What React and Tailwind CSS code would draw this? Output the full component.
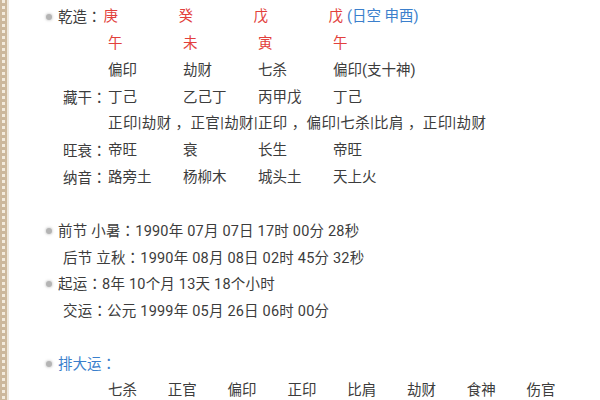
// Bazi chart readout: four pillars, hidden stems, luck cycle.

const RED = 'text-[#e2403c]'
const BLUE = 'text-[#3b7fcc]'

// centred full-width colon, as on the original device font
const C = () => <span className="font-['Noto_Sans_CJK_TC',sans-serif]">：</span>

function Bullet() {
  return (
    <span className="w-[58px] shrink-0 flex justify-end pr-[6px]">
      <span className="w-[6px] h-[6px] rounded-full bg-[#b4b4b4] shadow-[0_0_2px_1px_rgba(190,190,190,0.5)]" />
    </span>
  )
}

function Row({ children }) {
  return <div className="flex items-center h-[26.7px] whitespace-nowrap">{children}</div>
}

function Label({ children }) {
  return <span className="w-[108px] shrink-0 pl-[63px]">{children}</span>
}

function Cell({ children, className = '' }) {
  return <span className={`w-[75px] shrink-0 ${className}`}>{children}</span>
}

export default function App() {
  const pillars = [
    { stem: '庚', branch: '午', god: '偏印', hidden: '丁己', state: '帝旺', sound: '路旁土' },
    { stem: '癸', branch: '未', god: '劫财', hidden: '乙己丁', state: '衰', sound: '杨柳木' },
    { stem: '戊', branch: '寅', god: '七杀', hidden: '丙甲戊', state: '长生', sound: '城头土' },
    { stem: '戊', branch: '午', god: '偏印(支十神)', hidden: '丁己', state: '帝旺', sound: '天上火' },
  ]
  const luck = ['七杀', '正官', '偏印', '正印', '比肩', '劫财', '食神', '伤官']

  return (
    <div
      className="flex w-[600px] h-[400px] overflow-hidden bg-white text-[#3c3c3c] text-[14.5px]"
      style={{ fontFamily: 'Roboto, "Noto Sans CJK SC", sans-serif' }}
    >
      <div className="w-[7px] shrink-0 bg-[#ccb89c] flex justify-center">
        <div className="w-[3px] h-full bg-[repeating-linear-gradient(to_bottom,#f3ebdd_0px,#f3ebdd_3px,#ccb89c_3px,#ccb89c_6px)]" />
      </div>
      <div className="w-[2px] shrink-0 bg-[#efe8dc]" />

      <div className="flex-1 -ml-[9px] pt-[4px]">
        <Row>
          <Bullet />
          <span className="pr-[2px]">乾造<C /></span>
          {pillars.map((p, i) => (
            <Cell key={i} className={RED}>
              {p.stem}
              {i === 3 && <span className={`${BLUE} ml-[4px]`}>(日空 申酉)</span>}
            </Cell>
          ))}
        </Row>
        <Row>
          <Label />
          {pillars.map((p, i) => (
            <Cell key={i} className={RED}>{p.branch}</Cell>
          ))}
        </Row>
        <Row>
          <Label />
          {pillars.map((p, i) => (
            <Cell key={i}>{p.god}</Cell>
          ))}
        </Row>
        <Row>
          <Label>藏干<C /></Label>
          {pillars.map((p, i) => (
            <Cell key={i}>{p.hidden}</Cell>
          ))}
        </Row>
        <Row>
          <Label />
          <span className="tracking-[0.4px]">正印|劫财 ，正官|劫财|正印 ，偏印|七杀|比肩 ，正印|劫财</span>
        </Row>
        <Row>
          <Label>旺衰<C /></Label>
          {pillars.map((p, i) => (
            <Cell key={i}>{p.state}</Cell>
          ))}
        </Row>
        <Row>
          <Label>纳音<C /></Label>
          {pillars.map((p, i) => (
            <Cell key={i}>{p.sound}</Cell>
          ))}
        </Row>

        <Row />
        <Row>
          <Bullet />
          <span className="tracking-[0.2px]">前节 小暑<C />1990年 07月 07日 17时 00分 28秒</span>
        </Row>
        <Row>
          <span className="pl-[63px] tracking-[0.2px]">后节 立秋<C />1990年 08月 08日 02时 45分 32秒</span>
        </Row>
        <Row>
          <Bullet />
          <span className="tracking-[0.2px]">起运<C />8年 10个月 13天 18个小时</span>
        </Row>
        <Row>
          <span className="pl-[63px] tracking-[0.2px]">交运<C />公元 1999年 05月 26日 06时 00分</span>
        </Row>

        <Row />
        <Row>
          <Bullet />
          <span className={BLUE}>排大运<C /></span>
        </Row>
        <Row>
          <span className="w-[108px] shrink-0" />
          {luck.map((g, i) => (
            <span key={i} className="w-[59.8px] shrink-0">{g}</span>
          ))}
        </Row>
      </div>
    </div>
  )
}
